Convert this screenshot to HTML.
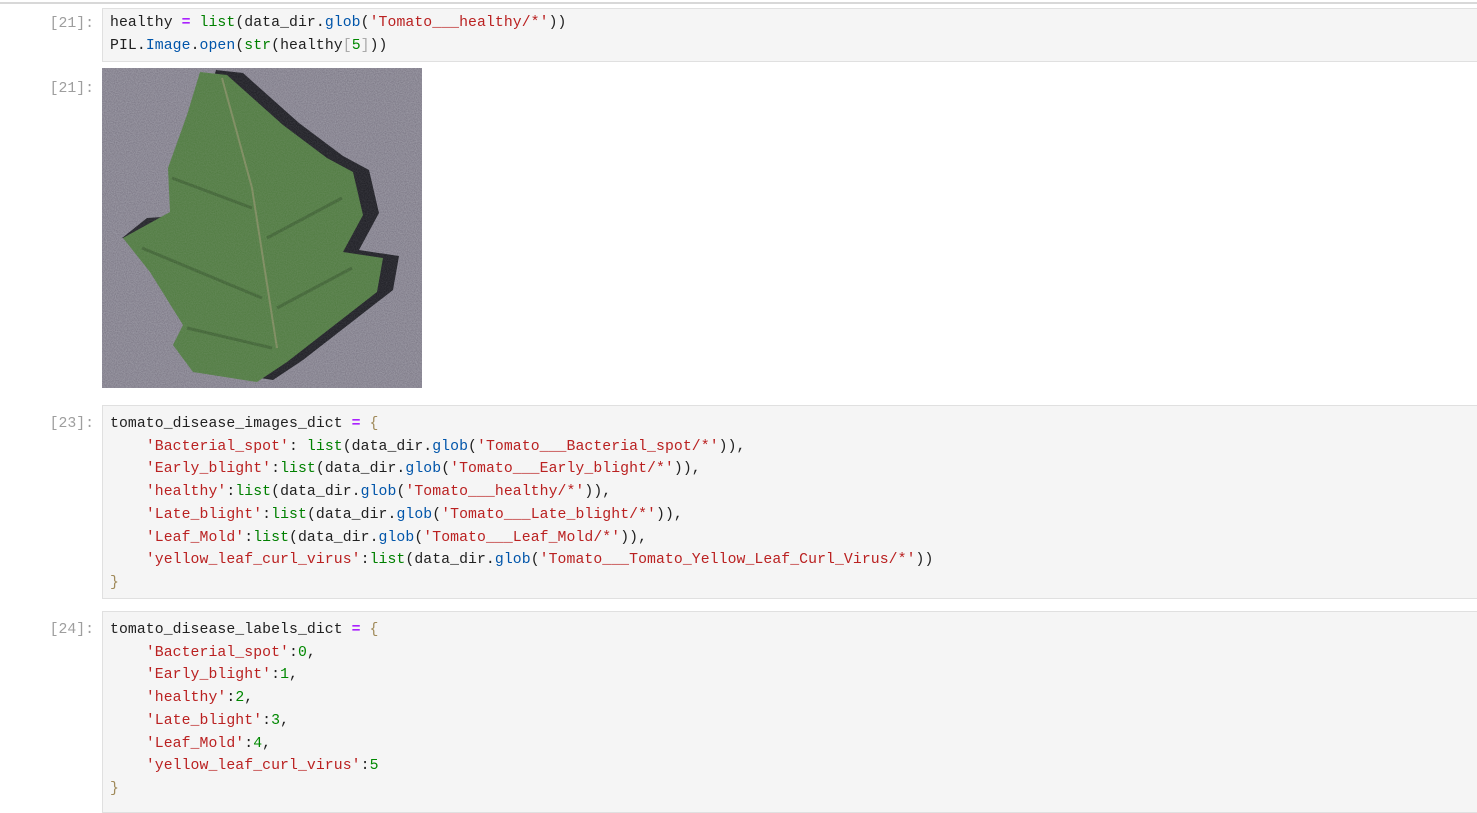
<!DOCTYPE html>
<html><head><meta charset="utf-8"><style>
body{margin:0;background:#fff;width:1477px;height:795px;overflow:hidden;position:relative;font-family:"Liberation Mono",monospace;}
.topline{position:absolute;left:0;top:2px;width:1477px;height:2px;background:#d8d8d8;}
.prompt{position:absolute;left:30px;width:64px;text-align:right;color:#9e9e9e;font-size:14.8px;line-height:22.7px;}
.cell{position:absolute;left:102px;right:0;background:#f5f5f5;border:1px solid #e0e0e0;border-right:none;}
pre{margin:0;padding:0 0 0 7px;font-family:"Liberation Mono",monospace;font-size:14.8px;line-height:22.7px;color:#212121;letter-spacing:0.07px;}
.k{color:#008000}.o{color:#aa22ff;font-weight:bold}.s{color:#ba2121}.f{color:#0055aa}.n{color:#080}.b{color:#aaa}
.br{color:#a08a5a}
</style></head><body>
<div class="topline"></div>
<div class="prompt" style="top:13px">[21]:</div>
<div class="cell" style="top:8px;height:52px"><pre style="padding-top:3px">healthy <span class="o">=</span> <span class="k">list</span>(data_dir<span>.</span><span class="f">glob</span>(<span class="s">'Tomato___healthy/*'</span>))
PIL<span>.</span><span class="f">Image</span>.<span class="f">open</span>(<span class="k">str</span>(healthy<span class="b">[</span><span class="n">5</span><span class="b">]</span>))</pre></div>

<div class="prompt" style="top:78px">[21]:</div>
<svg style="position:absolute;left:102px;top:68px" width="320" height="320" viewBox="0 0 320 320">
<defs><filter id="nz"><feTurbulence type="fractalNoise" baseFrequency="0.9" numOctaves="2" seed="3"/><feColorMatrix values="0 0 0 0 0.6  0 0 0 0 0.6  0 0 0 0 0.65  0 0 0 0.4 0"/></filter></defs>
<rect width="320" height="320" fill="#75717f"/>
<rect width="320" height="320" filter="url(#nz)"/>
<polygon fill="#1a1a20" transform="translate(16,-2)" points="98,4 85,47 66,100 68,144 21,170 48,204 81,257 71,277 91,304 155,314 185,294 275,224 281,190 241,184 261,147 251,104 225,90 181,57 125,7"/>
<polygon fill="#1e1e24" points="20,170 45,150 75,148 85,175"/>
<polygon fill="#4e7a3e" points="98,4 85,47 66,100 68,144 21,170 48,204 81,257 71,277 91,304 155,314 185,294 275,224 281,190 241,184 261,147 251,104 225,90 181,57 125,7"/>
<path d="M120,10 L150,120 L175,280" stroke="#7a8a5a" stroke-width="2" fill="none"/>
<path d="M70,110 L150,140 M40,180 L160,230 M85,260 L170,280 M240,130 L165,170 M250,200 L175,240" stroke="#3d6330" stroke-width="3" fill="none"/>
<rect width="320" height="320" filter="url(#nz)" opacity="0.5"/>
</svg>

<div class="prompt" style="top:413px">[23]:</div>
<div class="cell" style="top:405px;height:192px"><pre style="padding-top:7px">tomato_disease_images_dict <span class="o">=</span> <span class="br">{</span>
    <span class="s">'Bacterial_spot'</span>: <span class="k">list</span>(data_dir.<span class="f">glob</span>(<span class="s">'Tomato___Bacterial_spot/*'</span>)),
    <span class="s">'Early_blight'</span>:<span class="k">list</span>(data_dir.<span class="f">glob</span>(<span class="s">'Tomato___Early_blight/*'</span>)),
    <span class="s">'healthy'</span>:<span class="k">list</span>(data_dir.<span class="f">glob</span>(<span class="s">'Tomato___healthy/*'</span>)),
    <span class="s">'Late_blight'</span>:<span class="k">list</span>(data_dir.<span class="f">glob</span>(<span class="s">'Tomato___Late_blight/*'</span>)),
    <span class="s">'Leaf_Mold'</span>:<span class="k">list</span>(data_dir.<span class="f">glob</span>(<span class="s">'Tomato___Leaf_Mold/*'</span>)),
    <span class="s">'yellow_leaf_curl_virus'</span>:<span class="k">list</span>(data_dir.<span class="f">glob</span>(<span class="s">'Tomato___Tomato_Yellow_Leaf_Curl_Virus/*'</span>))
<span class="br">}</span></pre></div>

<div class="prompt" style="top:619px">[24]:</div>
<div class="cell" style="top:611px;height:200px"><pre style="padding-top:7px">tomato_disease_labels_dict <span class="o">=</span> <span class="br">{</span>
    <span class="s">'Bacterial_spot'</span>:<span class="n">0</span>,
    <span class="s">'Early_blight'</span>:<span class="n">1</span>,
    <span class="s">'healthy'</span>:<span class="n">2</span>,
    <span class="s">'Late_blight'</span>:<span class="n">3</span>,
    <span class="s">'Leaf_Mold'</span>:<span class="n">4</span>,
    <span class="s">'yellow_leaf_curl_virus'</span>:<span class="n">5</span>
<span class="br">}</span></pre></div>
</body></html>
